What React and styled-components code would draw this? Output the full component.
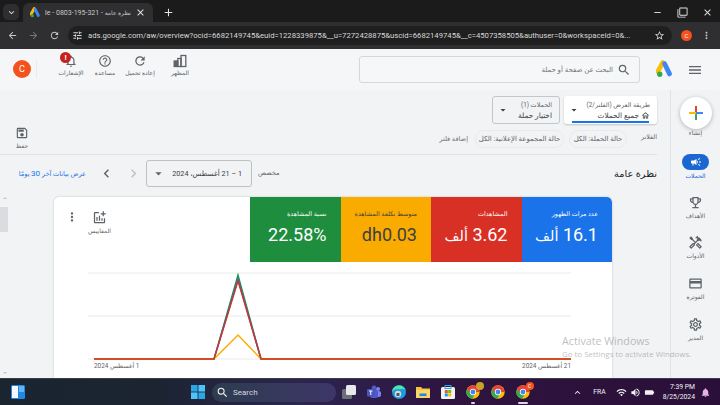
import React from "react";
import styled, { createGlobalStyle } from "styled-components";
import {
  MdAdd, MdAddchart, MdArrowBack, MdArrowDropDown, MdArrowForward, MdCampaign, MdChevronLeft,
  MdChevronRight, MdClose, MdExpandLess, MdExpandMore, MdHelpOutline, MdMenu, MdMoreVert,
  MdNotificationsNone, MdOutlineHome, MdOutlineCreditCard, MdOutlineEmojiEvents,
  MdOutlineFilterNone, MdOutlineHandyman, MdOutlineSave, MdOutlineSettings, MdRefresh, MdRemove,
  MdSearch, MdStarBorder, MdTune, MdNotifications, MdWifi, MdVolumeUp, MdBatteryStd,
} from "react-icons/md";

const GlobalStyle = createGlobalStyle`
  html, body {
    margin: 0;
    padding: 0;
    background: #f1f3f4;
  }
  * {
    box-sizing: border-box;
  }
`;

const Screen = styled.div`
  position: relative;
  width: 720px;
  height: 405px;
  overflow: hidden;
  display: flex;
  flex-direction: column;
  font-family: Roboto, "DejaVu Sans", sans-serif;
  color: #3c4043;
`;

/* browser chrome */
const TabStrip = styled.div`
  height: 22px;
  flex: none;
  background: #1b1b1c;
  display: flex;
  align-items: flex-end;
  color: #e3e3e3;
`;

const TabMenu = styled.div`
  width: 16px;
  height: 16px;
  margin: 0 4px 2px 3px;
  border-radius: 5px;
  background: #2e2e30;
  display: flex;
  align-items: center;
  justify-content: center;
  font-size: 11px;
`;

const Tab = styled.div`
  width: 130px;
  height: 19px;
  border-radius: 6px 6px 0 0;
  background: #2f2f31;
  display: flex;
  align-items: center;
  gap: 4px;
  padding: 0 7px;
  font-size: 11px;
`;

const TabTitle = styled.div`
  flex: 1;
  min-width: 0;
  direction: rtl;
  white-space: nowrap;
  overflow: hidden;
  font-size: 7px;
  color: #c8c8c8;
`;

const TabTitleArabic = styled.span`
  font-size: 6px;
`;

const NewTab = styled.div`
  margin: 0 0 3px 9px;
  font-size: 13px;
  line-height: 0;
`;

const WindowButtons = styled.div`
  margin-left: auto;
  display: flex;
  gap: 14px;
  padding: 0 7px 4px 0;
  font-size: 11px;
`;

const AddressRow = styled.div`
  height: 27px;
  flex: none;
  background: #2f2f31;
  color: #c7c7c7;
  display: flex;
  align-items: center;
  padding: 0 6px 0 7px;
  font-size: 11px;
  gap: 10px;
`;

const Omnibox = styled.div`
  width: 604px;
  flex: none;
  height: 19px;
  margin-left: -2px;
  border-radius: 10px;
  background: #1f1f20;
  display: flex;
  align-items: center;
  gap: 5px;
  padding: 0 7px 0 4px;
  color: #d8d8d8;
`;

const Url = styled.div`
  flex: 1;
  min-width: 0;
  white-space: nowrap;
  font-size: 7.7px;
`;

const ProfileDot = styled.div`
  width: 11px;
  height: 11px;
  margin: 0 -1px;
  border-radius: 50%;
  background: #f4511e;
  color: #fff;
  font-size: 6px;
  display: flex;
  align-items: center;
  justify-content: center;
`;

/* ads header */
const AdsHeader = styled.header`
  height: 41px;
  flex: none;
  display: flex;
  align-items: flex-start;
  background: #f5f6f7;
`;

const Avatar = styled.div`
  width: 18px;
  height: 18px;
  margin: 11px 0 0 13px;
  border-radius: 50%;
  background: #f4511e;
  color: #fff;
  font-size: 9px;
  display: flex;
  align-items: center;
  justify-content: center;
`;

const HeaderDivider = styled.div`
  width: 1px;
  height: 18px;
  margin: 11px 0 0 5px;
  background: #e8eaed;
`;

const HeaderActions = styled.div`
  display: flex;
  margin-left: 17px;
`;

const HeaderAction = styled.div`
  position: relative;
  width: ${(p) => p.$width}px;
  padding-top: 5px;
  display: flex;
  flex-direction: column;
  align-items: center;
  gap: 1px;
  font-size: 14px;
  color: #5f6368;
`;

const TinyLabel = styled.div`
  font-size: 6px;
  line-height: 8px;
  white-space: nowrap;
  color: ${(p) => p.$color || "#5f6368"};
`;

const AlertBadge = styled.div`
  position: absolute;
  top: 3px;
  left: 6px;
  width: 11px;
  height: 11px;
  border-radius: 50%;
  background: #c5221f;
  color: #fff;
  font-size: 8px;
  font-weight: 700;
  line-height: 11px;
  text-align: center;
`;

const SearchBox = styled.div`
  width: 281px;
  height: 27px;
  margin: 7px 0 0 auto;
  border: 1px solid #d5d7da;
  border-radius: 3px;
  background: #f6f7f8;
  display: flex;
  justify-content: flex-end;
  align-items: center;
  gap: 4px;
  padding-right: 8px;
  font-size: 7px;
  color: #70757a;
`;

const LogoSlot = styled.div`
  margin: 11px 0 0 16px;
  line-height: 0;
`;

const MenuSlot = styled.div`
  margin: 9px 17px 0 13px;
  font-size: 16px;
  line-height: 0;
  padding-top: 4px;
  color: #5f6368;
`;

/* page body */
const Body = styled.div`
  flex: 1;
  min-height: 0;
  display: flex;
  background: #f1f3f4;
`;

const Content = styled.main`
  flex: 1;
  min-width: 0;
  display: flex;
  flex-direction: column;
`;

const FilterBand = styled.section`
  height: 65px;
  flex: none;
  margin-right: 13px;
  border-bottom: 1px solid #e0e2e5;
  display: flex;
  justify-content: space-between;
`;

const SaveAction = styled.div`
  margin: 36px 0 0 14px;
  width: 16px;
  display: flex;
  flex-direction: column;
  align-items: center;
  gap: 2px;
  font-size: 14px;
  color: #5f6368;
`;

const FilterColumn = styled.div`
  padding-top: 6px;
  display: flex;
  flex-direction: column;
  align-items: flex-end;
  gap: 6px;
`;

const SelectorRow = styled.div`
  display: flex;
  gap: 4px;
`;

const Selector = styled.div`
  position: relative;
  width: ${(p) => p.$width}px;
  height: 28px;
  border-radius: 3px;
  border: ${(p) => (p.$active ? "none" : "1px solid #c4c7ca")};
  background: ${(p) => (p.$active ? "#fff" : "transparent")};
  box-shadow: ${(p) => (p.$active ? "0 1px 2px rgba(60,64,67,.25)" : "none")};
  display: flex;
  align-items: center;
  justify-content: space-between;
  padding: 0 7px 0 4px;
  font-size: 12px;
`;

const SelectorText = styled.div`
  display: flex;
  flex-direction: column;
  align-items: flex-end;
  gap: 2px;
`;

const SelectorCaption = styled.div`
  font-size: 6.4px;
  line-height: 8px;
  white-space: nowrap;
  color: #5f6368;
`;

const SelectorValue = styled.div`
  display: flex;
  align-items: center;
  gap: 2px;
  font-size: 7.4px;
  line-height: 9px;
  color: #3c4043;
`;

const ActiveBar = styled.div`
  position: absolute;
  left: 8px;
  right: 8px;
  bottom: 1px;
  height: 2px;
  background: #1a73e8;
`;

const FilterRow = styled.div`
  display: flex;
  align-items: center;
  gap: 5px;
`;

const AddFilter = styled.div`
  margin-right: 2px;
  font-size: 6.6px;
  color: #70757a;
`;

const Chip = styled.div`
  width: ${(p) => p.$width}px;
  height: 18px;
  border: 1px solid #e8eaed;
  border-radius: 9px;
  display: flex;
  align-items: center;
  justify-content: center;
  font-size: 6.9px;
  color: #5f6368;
`;

const FilterLabel = styled.div`
  width: 25px;
  margin: -5px 0 0;
  text-align: right;
  font-size: 6.4px;
  color: #5f6368;
`;

const OverviewRow = styled.section`
  height: 42px;
  flex: none;
  display: flex;
  align-items: center;
  padding: 0 13px 6px 16px;
  color: #5f6368;
`;

const LastDays = styled.div`
  direction: rtl;
  width: 70px;
  font-size: 6.6px;
  white-space: nowrap;
  color: #1a73e8;
`;

const LastDaysNum = styled.span`
  font-size: 8px;
`;

const DateNav = styled.div`
  display: flex;
  align-items: center;
  margin-left: 12px;
  font-size: 17px;
  gap: 10px;
`;

const DateBox = styled.div`
  width: 106px;
  height: 27px;
  margin-left: 4px;
  border: 1px solid #bdc1c6;
  border-radius: 3px;
  display: flex;
  align-items: center;
  justify-content: space-between;
  padding: 0 9px 0 4px;
  font-size: 15px;
`;

const DateText = styled.div`
  direction: rtl;
  font-size: 7.2px;
  white-space: nowrap;
  color: #3c4043;
`;

const CustomLabel = styled.div`
  margin-left: 6px;
  font-size: 6.6px;
`;

const PageTitle = styled.h1`
  margin: 0 0 0 auto;
  font-size: 9.8px;
  font-weight: 500;
  color: #202124;
`;

const CardArea = styled.div`
  flex: 1;
  min-height: 0;
  display: flex;
  align-items: flex-start;
`;

const ScrollGutter = styled.div`
  width: 54px;
  height: 181px;
  flex: none;
  display: flex;
  flex-direction: column;
  align-items: flex-start;
  padding-bottom: 4px;
`;

const ScrollArrow = styled.div`
  width: 0;
  height: 0;
  margin-left: 3px;
  border-left: 2px solid transparent;
  border-right: 2px solid transparent;
  border-${(p) => (p.$down ? "top" : "bottom")}: 2px solid #c4c7ca;
  margin-top: ${(p) => (p.$down ? "auto" : "0")};
`;

const ScrollThumb = styled.div`
  width: 8px;
  height: 25px;
  margin-top: 8px;
  background: #dadce0;
`;

const Card = styled.div`
  width: 558px;
  height: 190px;
  background: #fff;
  border-radius: 5px 5px 0 0;
  box-shadow: 0 0 2px rgba(60, 64, 67, 0.3);
  overflow: hidden;
`;

const ScoreRow = styled.div`
  height: 65px;
  display: flex;
`;

const MetricTools = styled.div`
  width: 196px;
  display: flex;
  padding: 12px 0 0 11px;
  gap: 9px;
  color: #5f6368;
`;

const KebabSlot = styled.div`
  font-size: 14px;
  line-height: 0;
  padding-top: 1px;
`;

const MetricsPicker = styled.div`
  display: flex;
  flex-direction: column;
  align-items: center;
  gap: 2px;
  font-size: 15px;
  margin-top: 1px;
`;

const ScoreTile = styled.div`
  flex: 1;
  background: ${(p) => p.$bg};
  color: ${(p) => p.$fg || "#fff"};
  display: flex;
  flex-direction: column;
  align-items: flex-end;
  padding: 13px 14px 0 0;
  gap: 6px;
  border-top-right-radius: ${(p) => (p.$last ? "5px" : "0")};
`;

const TileLabel = styled.div`
  font-size: 6.4px;
  line-height: 8px;
`;

const TileValue = styled.div`
  direction: rtl;
  font-size: 18px;
  line-height: 21px;
  white-space: nowrap;
`;

const TileUnit = styled.span`
  font-size: 14.5px;
`;

const ChartSvg = styled.svg`
  display: block;
`;

const AxisLabels = styled.div`
  display: flex;
  justify-content: space-between;
  padding: 0 41px 0 40px;
  font-size: 6.4px;
  color: #5f6368;
`;

const AxisLabel = styled.div`
  direction: rtl;
`;

/* right rail */
const Rail = styled.nav`
  width: 50px;
  flex: none;
  border-left: 1px solid #e0e2e5;
  padding-top: 7px;
  display: flex;
  flex-direction: column;
  align-items: center;
`;

const CreateButton = styled.div`
  width: 32px;
  height: 32px;
  border-radius: 50%;
  background: #fff;
  box-shadow: 0 1px 4px rgba(60, 64, 67, 0.35);
  display: flex;
  align-items: center;
  justify-content: center;
`;

const CreateItem = styled.div`
  height: 53px;
  flex: none;
  display: flex;
  flex-direction: column;
  align-items: center;
`;

const RailItem = styled.div`
  height: 40.7px;
  flex: none;
  width: 100%;
  display: flex;
  flex-direction: column;
  align-items: center;
  gap: 2px;
  font-size: 15px;
  line-height: 0;
  color: #5f6368;
  padding-top: 4px;
`;

const ActivePill = styled.div`
  width: 27px;
  height: 16px;
  margin-bottom: 0;
  border-radius: 8px;
  background: #1a67d2;
  color: #fff;
  display: flex;
  align-items: center;
  justify-content: center;
  font-size: 12px;
`;

/* windows taskbar */
const Taskbar = styled.footer`
  height: 27px;
  flex: none;
  background: linear-gradient(90deg, #1a2530 0%, #1c2432 22%, #2c2550 42%, #2f1440 62%, #2a0f38 100%);
  border-top: 1px solid #3a3f45;
  display: flex;
  align-items: center;
  color: #f2f2f2;
`;

const Widgets = styled.div`
  margin-left: 11px;
  line-height: 0;
`;

const TaskCenter = styled.div`
  margin-left: 166px;
  display: flex;
  align-items: center;
`;

const SearchPill = styled.div`
  width: 124px;
  height: 19px;
  margin-left: 7px;
  border-radius: 10px;
  background: linear-gradient(90deg, #2d3c4f, #3d3668);
  display: flex;
  align-items: center;
  gap: 4px;
  padding-left: 4px;
  font-size: 13px;
`;

const SearchWord = styled.span`
  font-size: 8px;
  color: #d8d8e0;
`;

const AppIcons = styled.div`
  margin-left: 6px;
  display: flex;
  align-items: center;
  gap: 10.8px;
`;

const AppIcon = styled.div`
  position: relative;
  width: 14px;
  height: 14px;
  line-height: 0;
`;

const AppDot = styled.div`
  position: absolute;
  top: -3px;
  right: -4px;
  width: 8px;
  height: 8px;
  border-radius: 50%;
  background: ${(p) => p.$bg};
  font-size: 5px;
  line-height: 8px;
  text-align: center;
  color: #fff;
`;

const AppUnderline = styled.div`
  position: absolute;
  bottom: -5px;
  left: ${(p) => (p.$wide ? "2px" : "5px")};
  right: ${(p) => (p.$wide ? "2px" : "5px")};
  height: 2px;
  border-radius: 1px;
  background: #d8d8d8;
`;

const Tray = styled.div`
  margin-left: auto;
  padding-right: 9px;
  display: flex;
  align-items: center;
  font-size: 11px;
  gap: 3px;
`;

const TrayLang = styled.div`
  margin: 0 7px;
  font-size: 6.8px;
`;

const BatteryIcon = styled(MdBatteryStd)`
  transform: rotate(90deg);
`;

const Clock = styled.div`
  margin: 0 2px 0 5px;
  text-align: right;
  font-size: 6.8px;
  line-height: 10px;
`;

/* activation watermark lies over the page */
const Watermark = styled.div`
  position: absolute;
  left: 562px;
  top: 334px;
  font-family: "Open Sans", sans-serif;
  color: rgba(125, 125, 125, 0.5);
  pointer-events: none;
`;

const WatermarkTitle = styled.div`
  font-size: 10.7px;
  line-height: 15px;
`;

const WatermarkText = styled.div`
  font-size: 7.9px;
  line-height: 11px;
  white-space: nowrap;
`;

const AdsLogo = ({ size = 14 }) => (
  <svg width={size} height={size} viewBox="0 0 24 24">
    <path d="M9 3.5 2.6 15.2" stroke="#fbbc04" strokeWidth="6.4" strokeLinecap="round" />
    <path d="M11.5 5 18 18.5" stroke="#4285f4" strokeWidth="6.4" strokeLinecap="round" />
    <circle cx="5" cy="19" r="3.6" fill="#34a853" />
  </svg>
);

const AppearanceIcon = () => (
  <svg width="14" height="14" viewBox="0 0 14 14" fill="none" stroke="currentColor" strokeWidth="1.3">
    <rect x="8" y="1.5" width="4.8" height="11" />
    <rect x="4.8" y="4.5" width="3.2" height="8" />
    <rect x="1.2" y="7" width="3.6" height="5.5" fill="currentColor" />
  </svg>
);

const ChromeLogo = () => (
  <svg width="14" height="14" viewBox="0 0 24 24">
    <circle cx="12" cy="12" r="11.5" fill="#fbbc04" />
    <path d="M12 .5A11.5 11.5 0 0 0 2 6.3L7 15l5-3h10.9A11.5 11.5 0 0 0 12 .5z" fill="#ea4335" />
    <path d="M2 6.3A11.5 11.5 0 0 0 10.5 23.4L15.5 15H8z" fill="#34a853" />
    <circle cx="12" cy="12" r="5.4" fill="#fff" />
    <circle cx="12" cy="12" r="4.2" fill="#4285f4" />
  </svg>
);

const GooglePlus = () => (
  <svg width="14" height="14" viewBox="0 0 14 14">
    <rect x="6" y="0" width="2" height="7" fill="#ea4335" />
    <rect x="6" y="7" width="2" height="7" fill="#34a853" />
    <rect x="0" y="6" width="7" height="2" fill="#fbbc04" />
    <rect x="7" y="6" width="7" height="2" fill="#4285f4" />
  </svg>
);

const WidgetsIcon = () => (
  <svg width="14" height="14" viewBox="0 0 14 14">
    <rect width="14" height="14" rx="1.5" fill="#1e88e5" />
    <rect x="1" y="1" width="6" height="12" fill="#f5f9ff" />
    <rect x="8" y="1" width="5" height="6" fill="#64b5f6" />
  </svg>
);

const StartIcon = () => (
  <svg width="14" height="14" viewBox="0 0 14 14">
    <rect width="6.6" height="6.6" fill="#29a8e8" />
    <rect x="7.4" width="6.6" height="6.6" fill="#4fc3f7" />
    <rect y="7.4" width="6.6" height="6.6" fill="#4fc3f7" />
    <rect x="7.4" y="7.4" width="6.6" height="6.6" fill="#29a8e8" />
  </svg>
);

const TaskViewIcon = () => (
  <svg width="14" height="14" viewBox="0 0 14 14">
    <rect x="0" y="4" width="10" height="10" rx="1.5" fill="#6b6f78" />
    <rect x="4" y="0" width="10" height="10" rx="1.5" fill="#e8e8ea" />
  </svg>
);

const TeamsIcon = () => (
  <svg width="14" height="14" viewBox="0 0 14 14">
    <circle cx="11" cy="4" r="2" fill="#7b83eb" />
    <rect x="8" y="6" width="6" height="6" rx="2" fill="#7b83eb" />
    <circle cx="7" cy="3" r="2.4" fill="#5059c9" />
    <rect x="3" y="5" width="8" height="8" rx="2" fill="#5059c9" />
    <rect x="0" y="4" width="7.5" height="7.5" rx="1" fill="#4b53bc" />
    <path d="M2 6h3.5M3.75 6v4" stroke="#fff" strokeWidth="1" />
  </svg>
);

const EdgeIcon = () => (
  <svg width="14" height="14" viewBox="0 0 14 14">
    <circle cx="7" cy="7" r="7" fill="#1b9de2" />
    <path d="M0 7a7 7 0 0 1 13.8-1.2C13 3.5 10 3.2 8 4.5 5 3.5 1.5 4.5 0 7z" fill="#50e6a0" />
    <circle cx="6" cy="9" r="3.2" fill="#d5d8dc" />
    <rect x="4.5" y="8" width="3" height="3" rx=".6" fill="#555" />
  </svg>
);

const FolderIcon = () => (
  <svg width="14" height="14" viewBox="0 0 14 14">
    <path d="M0 2h5l1.5 1.5H14V13H0z" fill="#f5c242" />
    <rect y="5" width="14" height="8" fill="#fcd768" />
    <rect x="3.5" y="8.5" width="7" height="2.6" fill="#1e88e5" />
  </svg>
);

const StoreIcon = () => (
  <svg width="14" height="14" viewBox="0 0 14 14">
    <rect y="2" width="14" height="12" rx="1.5" fill="#f2f2f2" />
    <rect x="4" y="0.5" width="6" height="3" fill="none" stroke="#29a8e8" strokeWidth="1" />
    <rect x="3.8" y="5" width="3" height="3" fill="#f25022" />
    <rect x="7.2" y="5" width="3" height="3" fill="#7fba00" />
    <rect x="3.8" y="8.4" width="3" height="3" fill="#00a4ef" />
    <rect x="7.2" y="8.4" width="3" height="3" fill="#ffb900" />
  </svg>
);

const tiles = [
  { label: "نسبة المشاهدة", value: "22.58%", bg: "#1e8e3e" },
  { label: "متوسط تكلفة المشاهدة", value: "dh0.03", bg: "#f9ab00", fg: "#3c4043" },
  { label: "المشاهدات", value: "3.62", unit: "ألف", bg: "#d93025" },
  { label: "عدد مرات الظهور", value: "16.1", unit: "ألف", bg: "#1a73e8", last: true },
];

const railItems = [
  { label: "الأهداف", Icon: MdOutlineEmojiEvents },
  { label: "الأدوات", Icon: MdOutlineHandyman },
  { label: "الفوترة", Icon: MdOutlineCreditCard },
  { label: "المدير", Icon: MdOutlineSettings },
];

const headerActions = [
  { label: "الإشعارات", Icon: MdNotificationsNone, width: 34, alert: true },
  { label: "مساعدة", Icon: MdHelpOutline, width: 34 },
  { label: "إعادة تحميل", Icon: MdRefresh, width: 36 },
  { label: "المظهر", Icon: AppearanceIcon, width: 44 },
];

const Chart = () => (
  <ChartSvg width="558" height="100" viewBox="54 262 558 100">
    {[273, 316, 359].map((y) => (
      <line key={y} x1="88" x2="571" y1={y} y2={y} stroke="#e8eaed" strokeWidth="1" />
    ))}
    <polyline points="94,359 214,359 238,275 261,359 571,359" fill="none" stroke="#1e8e3e" strokeWidth="1.4" />
    <polyline points="94,359 214,359 238,279 261,359 571,359" fill="none" stroke="#1a73e8" strokeWidth="1.4" />
    <polyline points="94,359 214,359 238,335 261,359 571,359" fill="none" stroke="#f9ab00" strokeWidth="1.4" />
    <polyline points="94,359 214,359 238,281 261,359 571,359" fill="none" stroke="#d93025" strokeWidth="1.4" />
  </ChartSvg>
);

const App = () => (
  <Screen>
    <GlobalStyle />
    <TabStrip>
      <TabMenu><MdExpandMore /></TabMenu>
      <Tab>
        <AdsLogo size={11} />
        <TabTitle><TabTitleArabic>نظرة عامة</TabTitleArabic> - 321-195-0803 - Google</TabTitle>
        <MdClose />
      </Tab>
      <NewTab><MdAdd /></NewTab>
      <WindowButtons>
        <MdRemove />
        <MdOutlineFilterNone />
        <MdClose />
      </WindowButtons>
    </TabStrip>
    <AddressRow>
      <MdArrowBack />
      <MdArrowForward color="#777" />
      <MdRefresh />
      <Omnibox>
        <MdTune />
        <Url>ads.google.com/aw/overview?ocid=6682149745&amp;euid=1228339875&amp;__u=7272428875&amp;uscid=6682149745&amp;__c=4507358505&amp;authuser=0&amp;workspaceId=0&amp;...</Url>
        <MdStarBorder />
      </Omnibox>
      <ProfileDot>C</ProfileDot>
      <MdMoreVert />
    </AddressRow>

    <AdsHeader>
      <Avatar>C</Avatar>
      <HeaderDivider />
      <HeaderActions>
        {headerActions.map(({ label, Icon, width, alert }) => (
          <HeaderAction key={label} $width={width}>
            <Icon />
            <TinyLabel>{label}</TinyLabel>
            {alert && <AlertBadge>!</AlertBadge>}
          </HeaderAction>
        ))}
      </HeaderActions>
      <SearchBox>
        البحث عن صفحة أو حملة
        <MdSearch size={14} color="#5f6368" />
      </SearchBox>
      <LogoSlot><AdsLogo size={18} /></LogoSlot>
      <MenuSlot><MdMenu /></MenuSlot>
    </AdsHeader>

    <Body>
      <Content>
        <FilterBand>
          <SaveAction>
            <MdOutlineSave />
            <TinyLabel>حفظ</TinyLabel>
          </SaveAction>
          <FilterColumn>
            <SelectorRow>
              <Selector $width={68}>
                <MdArrowDropDown />
                <SelectorText>
                  <SelectorCaption>الحملات (1)</SelectorCaption>
                  <SelectorValue>اختيار حملة</SelectorValue>
                </SelectorText>
              </Selector>
              <Selector $width={93} $active>
                <MdArrowDropDown />
                <SelectorText>
                  <SelectorCaption>طريقة العرض (الفلتر/2)</SelectorCaption>
                  <SelectorValue>جميع الحملات <MdOutlineHome size={9} /></SelectorValue>
                </SelectorText>
                <ActiveBar />
              </Selector>
            </SelectorRow>
            <FilterRow>
              <AddFilter>إضافة فلتر</AddFilter>
              <Chip $width={89}>حالة المجموعة الإعلانية: الكل</Chip>
              <Chip $width={58}>حالة الحملة: الكل</Chip>
              <FilterLabel>الفلاتر</FilterLabel>
            </FilterRow>
          </FilterColumn>
        </FilterBand>

        <OverviewRow>
          <LastDays>عرض بيانات آخر <LastDaysNum>30</LastDaysNum> يومًا</LastDays>
          <DateNav>
            <MdChevronLeft />
            <MdChevronRight color="#bdc1c6" />
          </DateNav>
          <DateBox>
            <MdArrowDropDown />
            <DateText>1 – 21 أغسطس، 2024</DateText>
          </DateBox>
          <CustomLabel>مخصص</CustomLabel>
          <PageTitle>نظرة عامة</PageTitle>
        </OverviewRow>

        <CardArea>
          <ScrollGutter>
            <ScrollArrow />
            <ScrollThumb />
            <ScrollArrow $down />
          </ScrollGutter>
          <Card>
            <ScoreRow>
              <MetricTools>
                <KebabSlot><MdMoreVert /></KebabSlot>
                <MetricsPicker>
                  <MdAddchart />
                  <TinyLabel>المقاييس</TinyLabel>
                </MetricsPicker>
              </MetricTools>
              {tiles.map((t) => (
                <ScoreTile key={t.label} $bg={t.bg} $fg={t.fg} $last={t.last}>
                  <TileLabel>{t.label}</TileLabel>
                  <TileValue>{t.value} {t.unit && <TileUnit>{t.unit}</TileUnit>}</TileValue>
                </ScoreTile>
              ))}
            </ScoreRow>
            <Chart />
            <AxisLabels>
              <AxisLabel>1 أغسطس 2024</AxisLabel>
              <AxisLabel>21 أغسطس 2024</AxisLabel>
            </AxisLabels>
          </Card>
        </CardArea>
      </Content>

      <Rail>
        <CreateItem>
          <CreateButton><GooglePlus /></CreateButton>
          <TinyLabel>إنشاء</TinyLabel>
        </CreateItem>
        <RailItem>
          <ActivePill><MdCampaign /></ActivePill>
          <TinyLabel $color="#1a67d2">الحملات</TinyLabel>
        </RailItem>
        {railItems.map(({ label, Icon }) => (
          <RailItem key={label}>
            <Icon />
            <TinyLabel>{label}</TinyLabel>
          </RailItem>
        ))}
      </Rail>
    </Body>

    <Taskbar>
      <Widgets><WidgetsIcon /></Widgets>
      <TaskCenter>
        <StartIcon />
        <SearchPill>
          <MdSearch />
          <SearchWord>Search</SearchWord>
        </SearchPill>
        <AppIcons>
          <AppIcon><TaskViewIcon /></AppIcon>
          <AppIcon><TeamsIcon /></AppIcon>
          <AppIcon><EdgeIcon /></AppIcon>
          <AppIcon><FolderIcon /></AppIcon>
          <AppIcon><StoreIcon /></AppIcon>
          <AppIcon><ChromeLogo /><AppDot $bg="#c9a227" /><AppUnderline /></AppIcon>
          <AppIcon><ChromeLogo /></AppIcon>
          <AppIcon><ChromeLogo /><AppDot $bg="#f4511e">C</AppDot><AppUnderline $wide /></AppIcon>
        </AppIcons>
      </TaskCenter>
      <Tray>
        <MdExpandLess />
        <TrayLang>FRA</TrayLang>
        <MdWifi />
        <MdVolumeUp />
        <BatteryIcon />
        <Clock>7:39 PM<br />8/25/2024</Clock>
        <MdNotifications color="#e6b0e8" />
      </Tray>
    </Taskbar>

    <Watermark>
      <WatermarkTitle>Activate Windows</WatermarkTitle>
      <WatermarkText>Go to Settings to activate Windows.</WatermarkText>
    </Watermark>
  </Screen>
);

export default App;
